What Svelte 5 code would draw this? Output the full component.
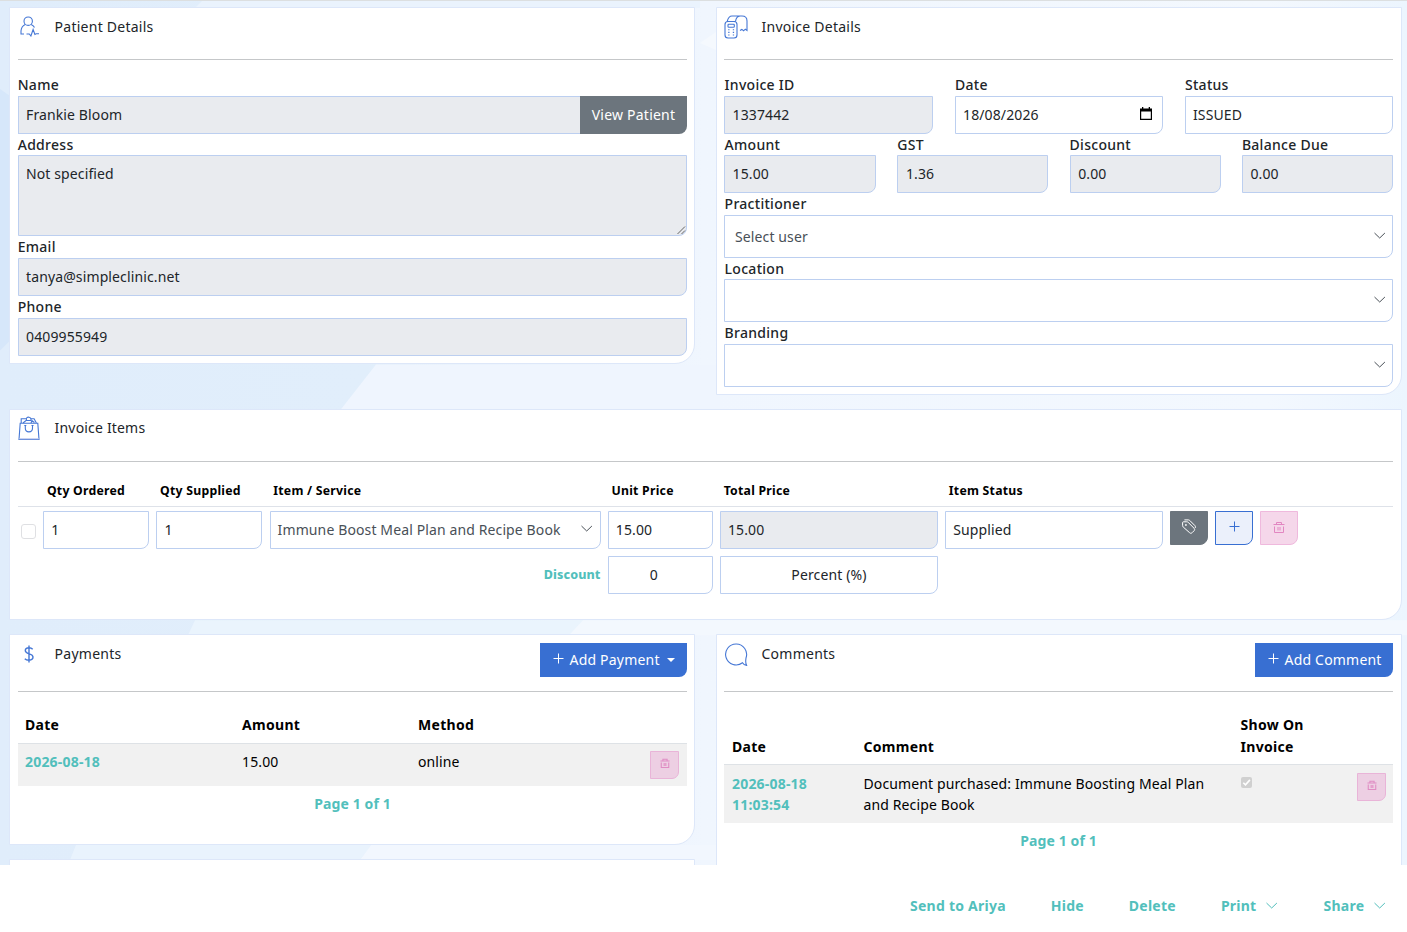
<script>
  const address = 'Not specified';
  const invoiceTop = [
    { label: 'Invoice ID', value: '1337442', readonly: true },
    { label: 'Date', value: '18/08/2026', calendar: true },
    { label: 'Status', value: 'ISSUED' }
  ];
  const amounts = [
    { label: 'Amount', value: '15.00' },
    { label: 'GST', value: '1.36' },
    { label: 'Discount', value: '0.00' },
    { label: 'Balance Due', value: '0.00' }
  ];
  const selects = [
    { label: 'Practitioner', value: 'Select user' },
    { label: 'Location', value: '' },
    { label: 'Branding', value: '' }
  ];
</script>

{#snippet chevron()}
  <svg class="chev" width="14" height="8" viewBox="0 0 14 8"><path d="M1.5 1 6.700 6 11.900 1" /></svg>
{/snippet}

{#snippet trash(size)}
  <svg width={size} height={size} viewBox="0 0 12 12" fill="none" stroke="currentColor" stroke-width={size < 12 ? 1.3 : 1}>
    <path d="M0.500 3.500h11M3.500 3.500v-2h5v2M1.500 5.500v6h9v-6M5 6v3.500M7 6v3.500" />
  </svg>
{/snippet}

{#snippet plus()}
  <svg class="plus" width="11" height="11" viewBox="0 0 11 11"><path d="M5.5 0.5v10M0.5 5.5h10" /></svg>
{/snippet}

<div class="page">
  <svg class="backdrop" width="1407" height="865" viewBox="0 0 1407 865" preserveAspectRatio="none">
    <defs>
      <linearGradient id="base" x1="0" x2="1" y1="0" y2="0">
        <stop offset="0" stop-color="#e0edfb" />
        <stop offset="0.26" stop-color="#e1eefb" />
        <stop offset="0.5" stop-color="#f0f6fe" />
        <stop offset="0.9" stop-color="#f3f8fe" />
        <stop offset="1" stop-color="#ecf5fe" />
      </linearGradient>
    </defs>
    <rect width="1407" height="865" fill="url(#base)" />
    <path d="M0 88 10 95V340L0 350Z" fill="#d6e7fa" />
    <path d="M195 7 202 0H700V7Z" fill="#eaf3fd" />
    <path d="M376 364H720V410H340Z" fill="#eff5fe" />
    <path d="M195 620H583L569 635H188Z" fill="#eaf4fd" />
    <path d="M583 620H1407V635H569Z" fill="#f3f8fe" />
    <path d="M76 845H371L360 860H70Z" fill="#e9f3fd" />
    <path d="M371 845H716V860H360Z" fill="#f2f7fe" />
    <path d="M700 42 716 31V49Z" fill="#f5f9fe" />
  </svg>

  <main>
    <div class="row two">
      <section class="card left patient">
        <header>
          <svg class="ico person" width="20" height="21" viewBox="0 0 20 21">
            <circle cx="8.2" cy="5.2" r="4.2" />
            <path d="M5.200 8.500C2.600 9.700 1.200 12 1 15v3h3M11.200 8.500c1.500.7 2.700 1.700 3.300 3M6.500 18h2.800l1.600 2 2.200-6.500 1.800 5 1.200-.8h2.900" />
          </svg>
          <h2>Patient Details</h2>
        </header>
        <div class="lbl first">Name</div>
        <div class="group"><div class="field ro">Frankie Bloom</div><button class="view">View Patient</button></div>
        <div class="lbl h21">Address</div>
        <div class="field ro area">{address}
          <svg class="grip" width="9" height="9" viewBox="0 0 9 9"><path d="M0.5 8 8 0.5M4.5 8 8 4.5" /></svg>
        </div>
        <div class="lbl">Email</div>
        <div class="field ro">tanya@simpleclinic.net</div>
        <div class="lbl">Phone</div>
        <div class="field ro">0409955949</div>
      </section>

      <section class="card right invoice">
        <header>
          <svg class="ico" width="24" height="24" viewBox="0 0 24 24">
            <rect x="1" y="6.5" width="12" height="16.5" rx="3" />
            <rect x="4" y="9.3" width="6.3" height="3" rx=".8" />
            <path d="M3.200 6.500C4 3.200 5.500 1 8 1h10c3.200 0 5 2 5 5v9.500l-1.700-1.300-1.700 1.600-1.800-1.400-1.800 1M11.500 6.300C12 3.500 13.500 1.200 16 1M3 6.500h8.500" />
            <path d="M4.200 14.800h1.300M8.800 14.800h1.300M4.200 17.400h1.300M8.800 17.400h1.300M4.200 20h1.300M8.800 20h1.300" />
          </svg>
          <h2>Invoice Details</h2>
        </header>
        <div class="cols three">
          {#each invoiceTop as f}
            <div>
              <div class="lbl">{f.label}</div>
              <div class="field" class:ro={f.readonly}>{f.value}
                {#if f.calendar}
                  <svg class="cal" width="12" height="13" viewBox="0 0 12 13"><path d="M0 1.500h2V0h1.300v1.500h5.400V0H10v1.500h2V13H0ZM1.200 4.600v7.200h9.600V4.600Z" fill-rule="evenodd" /></svg>
                {/if}
              </div>
            </div>
          {/each}
        </div>
        <div class="cols four">
          {#each amounts as f}
            <div>
              <div class="lbl h21">{f.label}</div>
              <div class="field ro">{f.value}</div>
            </div>
          {/each}
        </div>
        {#each selects as s, i}
          <div class="lbl" class:h21={i === 1}>{s.label}</div>
          <div class="field select">{s.value}{@render chevron()}</div>
        {/each}
      </section>
    </div>

    <section class="card items">
      <header>
        <svg class="ico bag" width="22" height="25" viewBox="0 0 22 25">
          <path d="M2.200 7.200h17.600l1.200 16.300H1Z" />
          <path d="M1.200 22.800h19.600" stroke="#b9c4ec" />
          <path d="M7.300 9.500v2.800c0 4.800 7.200 4.800 7.200 0V9.500M6.300 9.500h2M13.500 9.500h2M3.200 7V2.800h5.300M5 7l3-2.500h5M8.500 4.200C7.800 1.500 9.500 1 11 1.200s2.500 1.800 1.800 3.200M12.800 2.800h3.300L18.400 7M13 7l1-2.300 2.400 1.800" />
        </svg>
        <h2>Invoice Items</h2>
      </header>
      <div class="grid thead">
        <span></span><b>Qty Ordered</b><b>Qty Supplied</b><b>Item / Service</b><b>Unit Price</b><b>Total Price</b><b>Item Status</b>
      </div>
      <div class="grid line">
        <i class="check"></i>
        <div class="field">1</div>
        <div class="field">1</div>
        <div class="field select small">Immune Boost Meal Plan and Recipe Book{@render chevron()}</div>
        <div class="field">15.00</div>
        <div class="field ro">15.00</div>
        <div class="field">Supplied</div>
        <button class="sq tag" aria-label="Tags">
          <svg width="14" height="15" viewBox="0 0 14 15" fill="none" stroke="currentColor" stroke-width="1">
            <path d="M0.600 3.600Q.6 2.800 1.400 2.800H4.800Q5.600 2.800 6.200 3.400L12 9.200c.9.9.8 1.700.1 2.500l-2 2c-.8.8-1.700.8-2.500 0L1.200 8Q.6 7.400.6 6.600ZM2.400.9H6.400Q7.200.9 7.800 1.500l5.100 5.100c.6.7.7 1.500.4 2.300" /><circle cx="3.900" cy="6" r=".6" />
          </svg>
        </button>
        <button class="sq add" aria-label="Add">{@render plus()}</button>
        <button class="sq del" aria-label="Delete">{@render trash(12)}</button>
      </div>
      <div class="grid disc">
        <span class="dlabel">Discount</span>
        <div class="field mid number">0</div>
        <div class="field mid">Percent (%)</div>
      </div>
    </section>

    <div class="row two lower">
      <div class="stack">
        <section class="card left payments">
          <header>
            <svg class="ico dollar" width="10" height="18" viewBox="0 0 10 18"><path d="M5 .5v17M8.700 4.300C7.800 3.300 6.500 2.700 5 2.700c-2.300 0-3.700 1.100-3.700 2.900 0 4.300 7.700 2.200 7.700 6.500 0 1.900-1.600 3.100-4 3.100-1.700 0-3.300-.5-4.200-1.500" /></svg>
            <h2>Payments</h2>
            <button class="primary pay">{@render plus()}<span>Add Payment</span><i class="caret"></i></button>
          </header>
          <div class="ptable phead"><b>Date</b><b>Amount</b><b>Method</b></div>
          <div class="ptable prow"><b class="teal">2026-08-18</b><span>15.00</span><span>online</span>
            <button class="mini" aria-label="Delete payment">{@render trash(10)}</button></div>
          <div class="pager">Page 1 of 1</div>
        </section>
        <section class="card left next"></section>
      </div>

      <section class="card right comments">
        <header>
          <svg class="ico bubble" width="24" height="24" viewBox="0 0 24 24">
            <path d="M18.500 19.800A10.500 10.500 0 1 1 22 15c-.4 2.500-.8 4.900.6 7.400-1.900 0-3.100-.900-4.100-2.600Z" />
          </svg>
          <h2>Comments</h2>
          <button class="primary com">{@render plus()}<span>Add Comment</span></button>
        </header>
        <div class="ctable chead"><b>Date</b><b>Comment</b><b>Show On<br />Invoice</b></div>
        <div class="ctable crow">
          <b class="teal">2026-08-18<br />11:03:54</b>
          <span>Document purchased: Immune Boosting Meal Plan<br />and Recipe Book</span>
          <span><svg class="ticked" width="11" height="11" viewBox="0 0 11 11"><rect width="11" height="11" rx="2" fill="#d0d0d0" /><path d="M2.300 5.700 4.500 7.900 8.900 2.900" fill="none" stroke="#fff" stroke-width="1.600" /></svg></span>
          <button class="mini" aria-label="Delete comment">{@render trash(10)}</button>
        </div>
        <div class="pager">Page 1 of 1</div>
      </section>
    </div>
  </main>

  <footer>
    <a href="#send">Send to Ariya</a>
    <a href="#hide">Hide</a>
    <a href="#delete">Delete</a>
    <a href="#print">Print {@render chevron()}</a>
    <a href="#share">Share {@render chevron()}</a>
  </footer>
</div>

<style>
  :global(body) { margin: 0; overflow: hidden; }
  .page, .page * { box-sizing: border-box; }
  .page {
    position: relative;
    width: 1407px;
    height: 932px;
    overflow: hidden;
    background: #fff;
    font: 14px/21px "Noto Sans", "Open Sans", sans-serif;
    color: #212529;
    letter-spacing: 0.12px;
  }
  button { font: inherit; letter-spacing: inherit; padding: 0; margin: 0; }
  .backdrop { position: absolute; left: 0; top: 0; border-top: 1px solid #dcdfe0; }
  main { position: relative; height: 865px; padding: 7px 5px 0 9px; overflow: hidden; }
  .row.two { display: grid; grid-template-columns: 686px 686px; column-gap: 21px; align-items: start; }
  .card { background: #fff; border: 1px solid #dde7f9; border-bottom-right-radius: 20px; padding: 0 8px; }
  .card.left { padding-right: 7px; }
  .card.right { padding-left: 7px; }
  .patient { height: 357px; }
  .invoice { height: 388px; }
  header { display: flex; height: 52px; border-bottom: 1px solid #c5c7c9; position: relative; }
  h2 { position: absolute; left: 36.6px; top: 8px; margin: 0; font-size: 14px; line-height: 21px; font-weight: 400; letter-spacing: 0.25px; }
  .right h2 { left: 37.5px; }
  .ico { fill: none; stroke: #4577d5; stroke-width: 1.1; margin-top: 7px; }
  .person { margin: 8px 0 0 2px; }
  .lbl { display: block; height: 22px; line-height: 22px; font-weight: 500; letter-spacing: 0.28px; margin-left: -0.3px; }
  .right .lbl { margin-left: 0.6px; }
  .h21 { height: 21px; line-height: 22px; }
  .first { margin-top: 14px; }
  .group { display: flex; }
  .group .field { flex: 1; border-radius: 0; border-right: 0; }
  .view { width: 107px; height: 38px; border: 0; background: #6c757d; color: #fff; border-radius: 0 0 8px 0; letter-spacing: 0.22px; padding-bottom: 2px; }
  .field { position: relative; height: 38px; border: 1px solid #bccff0; border-radius: 0 0 8px 0; padding: 0 7px; line-height: 36px; background: #fff; white-space: nowrap; color: #212529; }
  .ro { background: #e9ebef; }
  .right .field.ro { padding-left: 7.6px; }
  .area { height: 81px; }
  .grip { position: absolute; right: 0; bottom: 0; fill: none; stroke: #555; stroke-width: .9; }
  .cols { display: grid; }
  .three { grid-template-columns: 209px 208px 208px; column-gap: 22px; margin-top: 14px; }
  .three > div:nth-child(n + 2) .lbl { margin-left: 0; }
  .four { grid-template-columns: 152px 151px 151px 151px; column-gap: 21.300px; }
  .four > div:nth-child(n + 2) .lbl { margin-left: 0; }
  .cal { position: absolute; right: 10px; top: 10px; }
  .select { height: 43px; line-height: 42px; padding-left: 10px; color: #495057; }
  .select .chev { position: absolute; right: 5.300px; top: 15.700px; }
  .chev { fill: none; stroke: currentColor; stroke-width: 1; }
  .select.small { height: 38px; line-height: 36px; padding-left: 7px; }
  .select.small .chev { top: 13px; right: 5.500px; }

  .items { height: 211px; margin-top: 14px; }
  .items h2 { top: 7px; letter-spacing: 0.18px; }
  .bag { margin-top: 6px; }
  .grid { display: grid; grid-template-columns: 18px 106px 106px 331px 105px 218px 218px 37.700px 37.700px 38px; column-gap: 7.200px; }
  .thead { height: 45px; border-bottom: 1px solid #dee2e9; padding-top: 18px; font-size: 12.25px; color: #000; letter-spacing: 0.25px; }
  .thead b { padding-left: 3.700px; font-weight: 700; }
  .line { padding-top: 4px; }
  .check { width: 15px; height: 15px; margin: 13px 0 0 3px; border: 1px solid #dfe0e3; border-radius: 3px; }
  .sq { display: flex; align-items: center; justify-content: center; width: 38px; height: 34px; border-radius: 0 0 8px 0; padding-bottom: 3px; }
  .tag { background: #6c757d; color: #fff; border: 1px solid #6c757d; }
  .add { background: #ebf0fb; border: 1px solid #386fd2; color: #386fd2; }
  .del { background: #f5d7ea; border: 1px solid #efb9dd; color: #e286c1; }
  .plus { fill: none; stroke: currentColor; stroke-width: 1; }
  .disc { margin-top: 7px; }
  .dlabel { grid-column: 1 / 5; text-align: right; font-weight: 800; font-size: 12.5px; color: #52bfbc; line-height: 37px; }
  .mid { text-align: center; }
  .number { padding-right: 20px; }

  .lower { margin-top: 14px; }
  .payments { height: 211px; }
  .payments header, .comments header { height: 57px; }
  .lower h2 { top: 8px; }
  .dollar { margin: 10px 0 0 6px; stroke-width: 1.400; }
  .next { margin-top: 14px; height: 60px; }
  .bubble { margin-top: 7.500px; }
  .primary { margin: 8px 0 0 auto; height: 34px; border: 0; background: #386fd2; color: #fff; border-radius: 0 0 8px 0; display: flex; align-items: center; padding: 0 0 1px 13px; gap: 5.500px; letter-spacing: 0.2px; }
  .primary .plus { margin-top: -2px; }
  .pay { width: 147px; }
  .com { width: 138px; }
  .caret { border: 4px solid transparent; border-top-color: #fff; border-bottom: 0; margin-left: 2px; }
  .ptable { display: grid; grid-template-columns: 217px 176px 232px 29px; padding: 0 0 0 7px; }
  .phead { height: 52px; padding-top: 22px; border-bottom: 1px solid #dee2e6; color: #000; letter-spacing: 0.3px; }
  .prow { height: 42px; background: #f1f1f1; color: #000; padding-top: 7px; }
  .mini { width: 29px; height: 28px; background: #edcfe3; border: 1px solid #e9b4d8; border-radius: 0 0 7px 0; color: #e08cc3; display: flex; align-items: center; justify-content: center; padding-bottom: 4px; }
  .teal, .pager { color: #52bfbc; font-weight: 700; }
  .teal { letter-spacing: 0.2px; }
  .pager { text-align: center; padding-top: 7px; }
  .comments { height: 300px; }
  .ctable { display: grid; grid-template-columns: 131.500px 377px 116.500px 29px; padding: 0 0 0 8px; }
  .chead { height: 73px; padding-top: 22px; line-height: 22px; border-bottom: 1px solid #dee2e6; align-items: end; padding-bottom: 6px; color: #000; letter-spacing: 0.3px; }
  .crow { height: 58px; background: #f1f1f1; color: #000; padding-top: 8px; }
  .ticked { margin-top: 4px; display: block; }

  footer { position: relative; height: 67px; background: #fff; display: flex; align-items: center; justify-content: flex-end; gap: 45px; padding: 13px 20.500px 0 0; }
  footer a { color: #52bfbc; text-decoration: none; font-weight: 700; white-space: nowrap; letter-spacing: 0.24px; }
  footer .chev { margin-left: 4.300px; vertical-align: 1px; }
</style>
